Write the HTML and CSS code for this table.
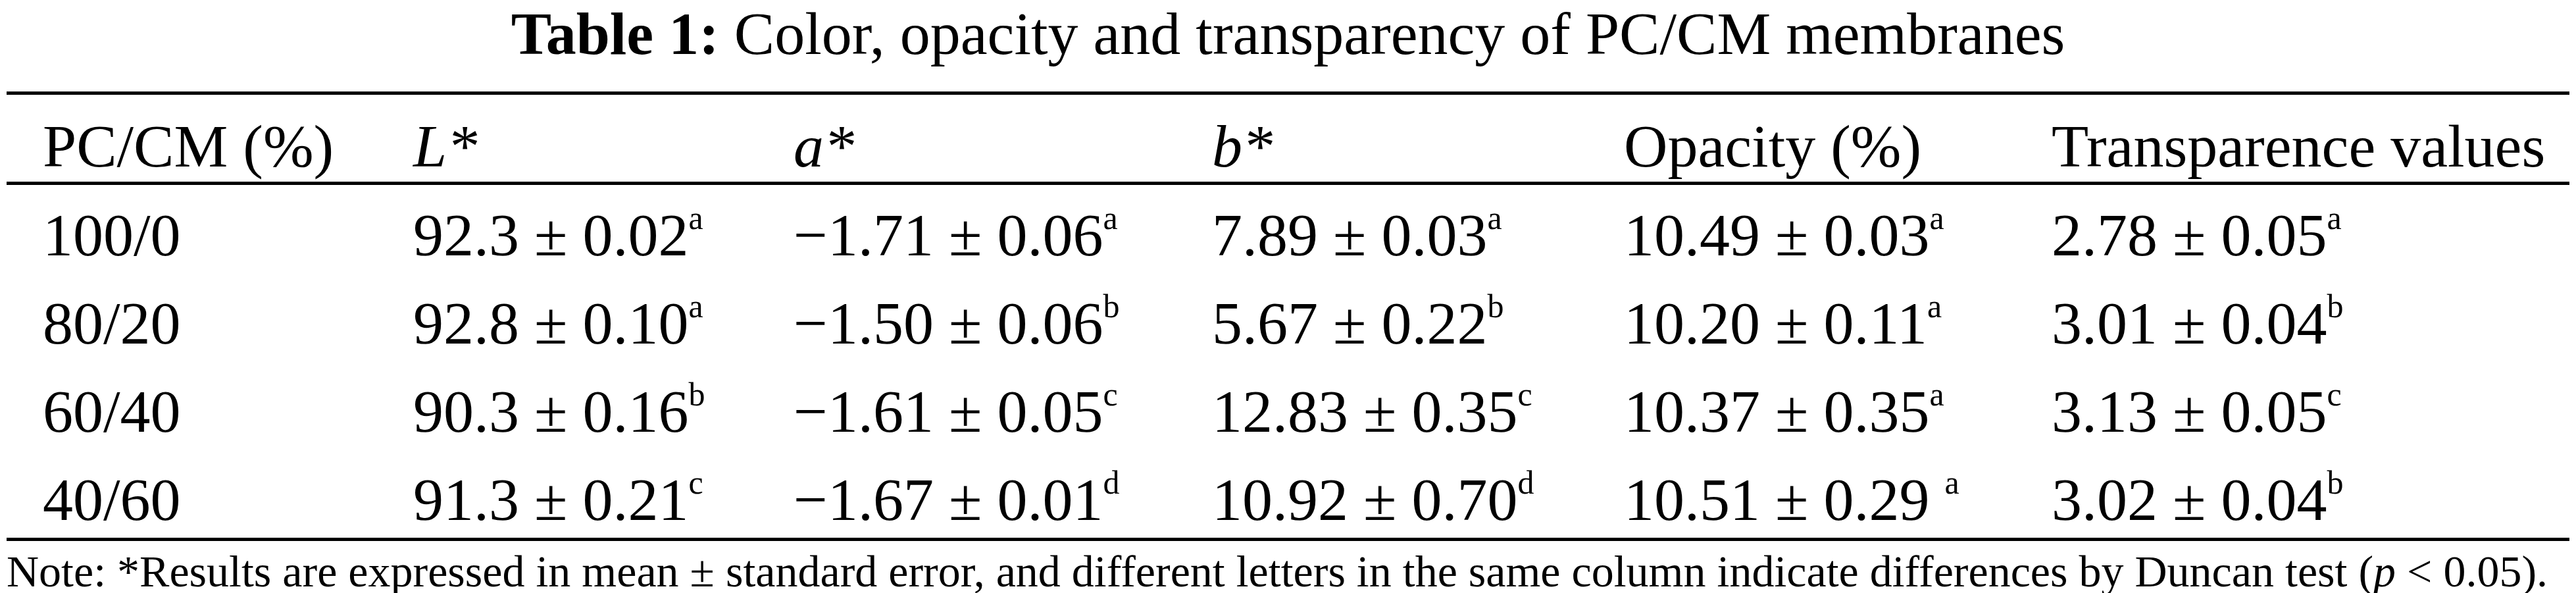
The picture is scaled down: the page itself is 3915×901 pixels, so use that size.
FILE: index.html
```
<!DOCTYPE html>
<html lang="en">
<head>
    <meta charset="UTF-8">
    <meta name="viewport" content="width=device-width, initial-scale=1.0">
    <title>Table 1</title>
    <link rel="stylesheet" href="styles.css">
</head>
<body>
    <div class="page">
        <h1 class="caption"><strong>Table 1:</strong> Color, opacity and transparency of PC/CM membranes</h1>

        <!-- Bảng kết quả -->
        <table class="data-table">
            <colgroup>
                <col class="col-ratio">
                <col class="col-l">
                <col class="col-a">
                <col class="col-b">
                <col class="col-opacity">
                <col class="col-trans">
            </colgroup>
            <thead>
                <tr>
                    <th>PC/CM (%)</th>
                    <th><em>L*</em></th>
                    <th><em>a*</em></th>
                    <th><em>b*</em></th>
                    <th>Opacity (%)</th>
                    <th>Transparence values</th>
                </tr>
            </thead>
            <tbody>
                <tr>
                    <td>100/0</td>
                    <td>92.3 ± 0.02<sup>a</sup></td>
                    <td>−1.71 ± 0.06<sup>a</sup></td>
                    <td>7.89 ± 0.03<sup>a</sup></td>
                    <td>10.49 ± 0.03<sup>a</sup></td>
                    <td>2.78 ± 0.05<sup>a</sup></td>
                </tr>
                <tr>
                    <td>80/20</td>
                    <td>92.8 ± 0.10<sup>a</sup></td>
                    <td>−1.50 ± 0.06<sup>b</sup></td>
                    <td>5.67 ± 0.22<sup>b</sup></td>
                    <td>10.20 ± 0.11<sup>a</sup></td>
                    <td>3.01 ± 0.04<sup>b</sup></td>
                </tr>
                <tr>
                    <td>60/40</td>
                    <td>90.3 ± 0.16<sup>b</sup></td>
                    <td>−1.61 ± 0.05<sup>c</sup></td>
                    <td>12.83 ± 0.35<sup>c</sup></td>
                    <td>10.37 ± 0.35<sup>a</sup></td>
                    <td>3.13 ± 0.05<sup>c</sup></td>
                </tr>
                <tr>
                    <td>40/60</td>
                    <td>91.3 ± 0.21<sup>c</sup></td>
                    <td>−1.67 ± 0.01<sup>d</sup></td>
                    <td>10.92 ± 0.70<sup>d</sup></td>
                    <td>10.51 ± 0.29 <sup>a</sup></td>
                    <td>3.02 ± 0.04<sup>b</sup></td>
                </tr>
            </tbody>
        </table>

        <p class="note">Note: *Results are expressed in mean ± standard error, and different letters in the same column indicate differences by Duncan test (<em>p</em> &lt; 0.05).</p>
    </div>
</body>
</html>
```

FILE: styles.css
```
* {
    margin: 0;
    padding: 0;
    box-sizing: border-box;
}

body {
    font-family: "Liberation Serif", "Times New Roman", serif;
    background-color: #fff;
    color: #000;
}

.page {
    padding: 0 10px;
}

.caption {
    font-size: 92px;
    font-weight: normal;
    line-height: 102px;
    text-align: center;
    margin-bottom: 37px;
}

.caption strong {
    font-weight: bold;
}

.data-table {
    width: 100%;
    table-layout: fixed;
    border-collapse: separate;
    border-spacing: 0;
    border-top: 5px solid #000;
    border-bottom: 5px solid #000;
    font-size: 92px;
}

.col-ratio { width: 563px; }
.col-l { width: 578px; }
.col-a { width: 636px; }
.col-b { width: 626px; }
.col-opacity { width: 650px; }

.data-table th,
.data-table td {
    text-align: left;
    font-weight: normal;
    white-space: nowrap;
    padding-left: 55px;
}

.data-table th {
    line-height: 108px;
    padding-top: 24px;
    border-bottom: 5px solid #000;
}

.data-table td {
    line-height: 116px;
    padding-top: 18px;
}

.data-table em {
    font-style: italic;
}

.data-table sup {
    font-size: 50px;
    line-height: 0;
    vertical-align: 40px;
}

.note {
    font-size: 68px;
    line-height: 68px;
    margin-top: 12px;
    white-space: nowrap;
}
```
